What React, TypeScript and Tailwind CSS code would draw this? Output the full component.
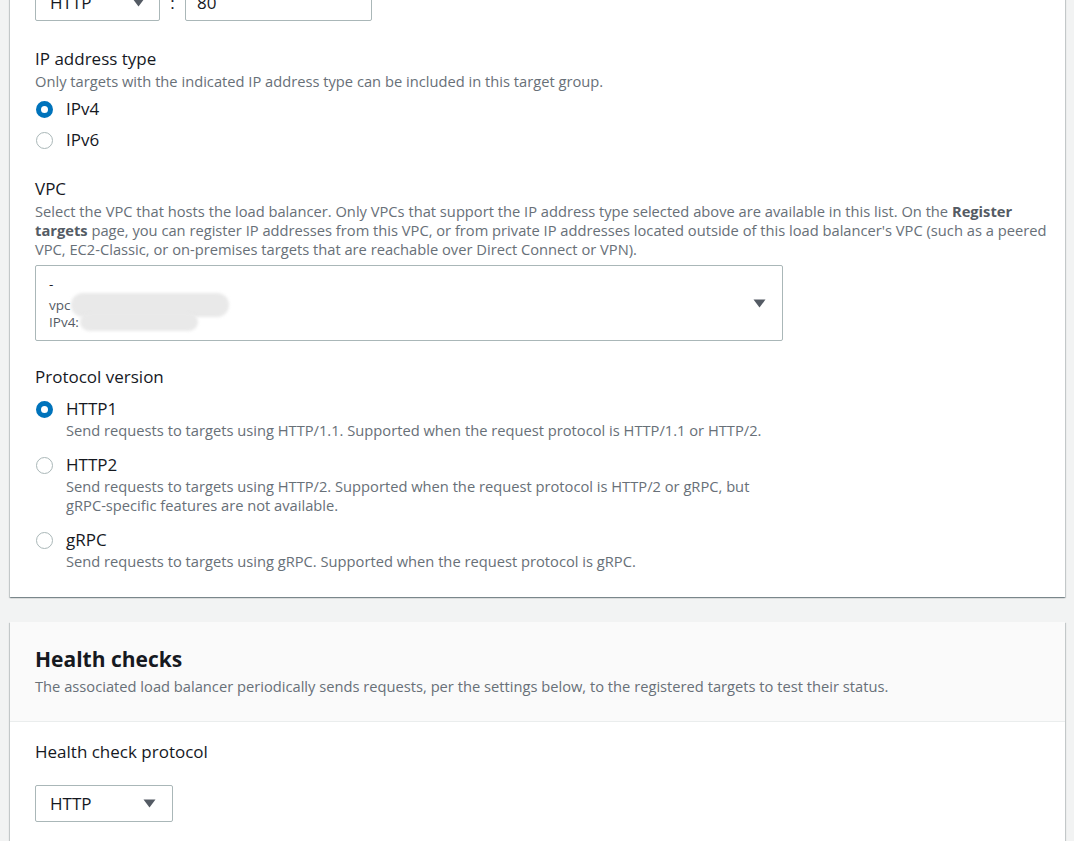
import React from "react";

const font = { fontFamily: '"Open Sans", "Noto Sans", Arial, sans-serif' };

const Caret: React.FC = () => (
  <svg width="13" height="9" viewBox="0 0 13 9" className="shrink-0">
    <path d="M0.5 0.5 H12.5 L6.5 8.5 Z" fill="#545b64" />
  </svg>
);

const Radio: React.FC<{ on?: boolean }> = ({ on }) =>
  on ? (
    <span className="block w-[17px] h-[17px] rounded-full border-[5px] border-[#0073bb] bg-white shrink-0" />
  ) : (
    <span className="block w-[17px] h-[17px] rounded-full border border-[#aab7b8] bg-white shrink-0" />
  );

const RadioRow: React.FC<{ on?: boolean; label: string; desc?: React.ReactNode; className?: string }> = ({
  on,
  label,
  desc,
  className,
}) => (
  <div className={`flex items-start ${className ?? ""}`}>
    <div className="w-[31px] pl-[1px] pt-[3px]">
      <Radio on={on} />
    </div>
    <div>
      <div className="text-[17px] leading-[22px] text-[#16191f]">{label}</div>
      {desc && <div className="text-[14.7px] leading-[19px] text-[#687078] mt-[1px]">{desc}</div>}
    </div>
  </div>
);

const cardShadow =
  "shadow-[0_1px_1px_0_rgba(0,28,36,0.3),1px_1px_1px_0_rgba(0,28,36,0.15),-1px_1px_1px_0_rgba(0,28,36,0.15)]";

export default function App() {
  return (
    <div className="bg-[#f2f3f3] h-[841px] overflow-hidden" style={font}>
      {/* Target group settings (scrolled) */}
      <div className={`ml-[10px] mr-[9px] -mt-[16px] bg-white ${cardShadow} px-[25px] pb-[26px]`}>
        <div className="flex items-center">
          <div className="w-[125px] h-[37px] border border-[#aab7b8] rounded-[2px] flex items-center justify-between pl-[14px] pr-[14px] text-[17px] text-[#16191f]">
            HTTP
            <Caret />
          </div>
          <span className="w-[25px] text-center text-[17px] text-[#16191f]">:</span>
          <div className="w-[187px] h-[37px] border border-[#aab7b8] rounded-[2px] flex items-center pl-[11px] text-[17px] text-[#16191f]">
            80
          </div>
        </div>

        {/* IP address type */}
        <div className="mt-[27px]">
          <div className="text-[17px] leading-[22px] text-[#16191f]">IP address type</div>
          <div className="text-[14.7px] leading-[19px] text-[#687078] mt-[2px]">
            Only targets with the indicated IP address type can be included in this target group.
          </div>
          <RadioRow on label="IPv4" className="mt-[7px]" />
          <RadioRow label="IPv6" className="mt-[9px]" />
        </div>

        {/* VPC */}
        <div className="mt-[27px]">
          <div className="text-[17px] leading-[22px] text-[#16191f]">VPC</div>
          <div className="text-[14.7px] leading-[19px] text-[#687078] mt-[2px] whitespace-nowrap">
            Select the VPC that hosts the load balancer. Only VPCs that support the IP address type selected above
            are available in this list. On the <b className="font-bold text-[#545b64]">Register</b>
            <br />
            <b className="font-bold text-[#545b64]">targets</b> page, you can register IP addresses from this VPC, or
            from private IP addresses located outside of this load balancer's VPC (such as a peered
            <br />
            VPC, EC2-Classic, or on-premises targets that are reachable over Direct Connect or VPN).
          </div>
          <div className="mt-[6px] w-[748px] h-[76px] border border-[#aab7b8] rounded-[2px] flex items-center justify-between pl-[13px] pr-[16px]">
            <div className="text-[13.5px] leading-[18.5px] text-[#545b64]">
              <div className="text-[#16191f]">-</div>
              <div className="flex items-center">
                vpc
                <span className="inline-block ml-[1px] w-[158px] h-[24px] rounded-full bg-[#e9e9e9] blur-[1.5px]" />
              </div>
              <div className="flex items-center -mt-[4px]">
                IPv4:
                <span className="inline-block ml-[1px] w-[118px] h-[18px] rounded-full bg-[#e9e9e9] blur-[1.5px]" />
              </div>
            </div>
            <Caret />
          </div>
        </div>

        {/* Protocol version */}
        <div className="mt-[25px]">
          <div className="text-[17px] leading-[22px] text-[#16191f]">Protocol version</div>
          <RadioRow
            on
            label="HTTP1"
            className="mt-[10px]"
            desc="Send requests to targets using HTTP/1.1. Supported when the request protocol is HTTP/1.1 or HTTP/2."
          />
          <RadioRow
            label="HTTP2"
            className="mt-[14px]"
            desc={
              <>
                Send requests to targets using HTTP/2. Supported when the request protocol is HTTP/2 or gRPC, but
                <br />
                gRPC-specific features are not available.
              </>
            }
          />
          <RadioRow
            label="gRPC"
            className="mt-[14px]"
            desc="Send requests to targets using gRPC. Supported when the request protocol is gRPC."
          />
        </div>
      </div>

      {/* Health checks */}
      <div className={`ml-[10px] mr-[9px] mt-[25px] bg-white ${cardShadow}`}>
        <div className="bg-[#fafafa] border-b border-[#eaeded] px-[25px] pt-[24px] pb-[25px]">
          <h2 className="text-[21px] leading-[26px] font-bold text-[#16191f]">Health checks</h2>
          <div className="text-[14.7px] leading-[19px] text-[#687078] mt-[5px]">
            The associated load balancer periodically sends requests, per the settings below, to the registered
            targets to test their status.
          </div>
        </div>
        <div className="px-[25px] pt-[19px] pb-[30px]">
          <div className="text-[17px] leading-[22px] text-[#16191f]">Health check protocol</div>
          <div className="mt-[22px] w-[138px] h-[37px] border border-[#aab7b8] rounded-[2px] flex items-center justify-between pl-[14px] pr-[16px] text-[17px] text-[#16191f]">
            HTTP
            <Caret />
          </div>
        </div>
      </div>
    </div>
  );
}
